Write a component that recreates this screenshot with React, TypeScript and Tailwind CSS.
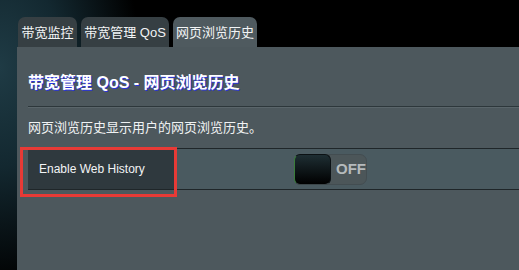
import React from "react";

const font = { fontFamily: '"Liberation Sans", "Noto Sans CJK SC", sans-serif' };

export default function App() {
  return (
    <div
      className="relative w-[519px] h-[270px] overflow-hidden flex flex-col bg-[radial-gradient(ellipse_140px_220px_at_0%_25%,#1f3b45_0%,#132830_45%,#000_100%)]"
      style={font}
    >
      <div className="flex flex-col pl-[17px] pt-[17px] h-full">
        <div className="flex gap-[4px] pl-[1px] h-[30px] items-end">
          <div className="w-[59px] h-[30px] rounded-t-[7px] bg-[#363f43] text-[#f2f4f5] text-[13px] flex items-center justify-center pt-[2px]">
            带宽监控
          </div>
          <div className="w-[88px] h-[30px] rounded-t-[7px] bg-[#363f43] text-[#f2f4f5] text-[13px] flex items-center justify-center pt-[2px]">
            带宽管理 QoS
          </div>
          <div className="w-[84px] h-[30px] rounded-t-[7px] bg-[#4f5a5f] text-[#f2f4f5] text-[13px] flex items-center justify-center pt-[2px]">
            网页浏览历史
          </div>
        </div>
        <div className="flex-1 bg-[#4d585d] pl-[11px] flex flex-col">
          <div className="pt-[26px] h-[46px] text-[16px] leading-[20px] font-bold text-white [text-shadow:1px_1px_0_#2a34d8]">
            带宽管理 QoS - 网页浏览历史
          </div>
          <div className="mt-[13px] h-[1px] bg-[#2d373b]" />
          <div className="h-[1px] bg-[#5a656a]" />
          <div className="mt-[11px] text-[13px] leading-[18px] text-[#f0f2f3]">
            网页浏览历史显示用户的网页浏览历史。
          </div>
          <div className="mt-[11px] flex h-[42px] border-y border-[#1f2629]">
            <div className="w-[148px] bg-[#2f393e] border-r border-[#1f2629] flex items-center pl-[11px] text-[12px] text-[#f2f4f5]">
              Enable Web History
            </div>
            <div className="flex-1 bg-[#4a5a60] flex items-center pl-[118px]">
              <div className="w-[73px] h-[31px] rounded-[7px] bg-[#4c5659] border border-[#434d51] flex items-center">
                <div className="w-[37px] h-[31px] -ml-px rounded-[6px] bg-[linear-gradient(#1e2e33,#000)] border border-[#0b1114] border-b-[#3c4649] border-l-[#3a7d3a]" />
                <span className="ml-[5px] text-[15px] font-bold text-[#b5babc]">OFF</span>
              </div>
            </div>
          </div>
        </div>
      </div>
      <div className="absolute left-[20px] top-[147px] w-[157px] h-[50px] border-[3px] border-[#e83a36]" />
    </div>
  );
}
